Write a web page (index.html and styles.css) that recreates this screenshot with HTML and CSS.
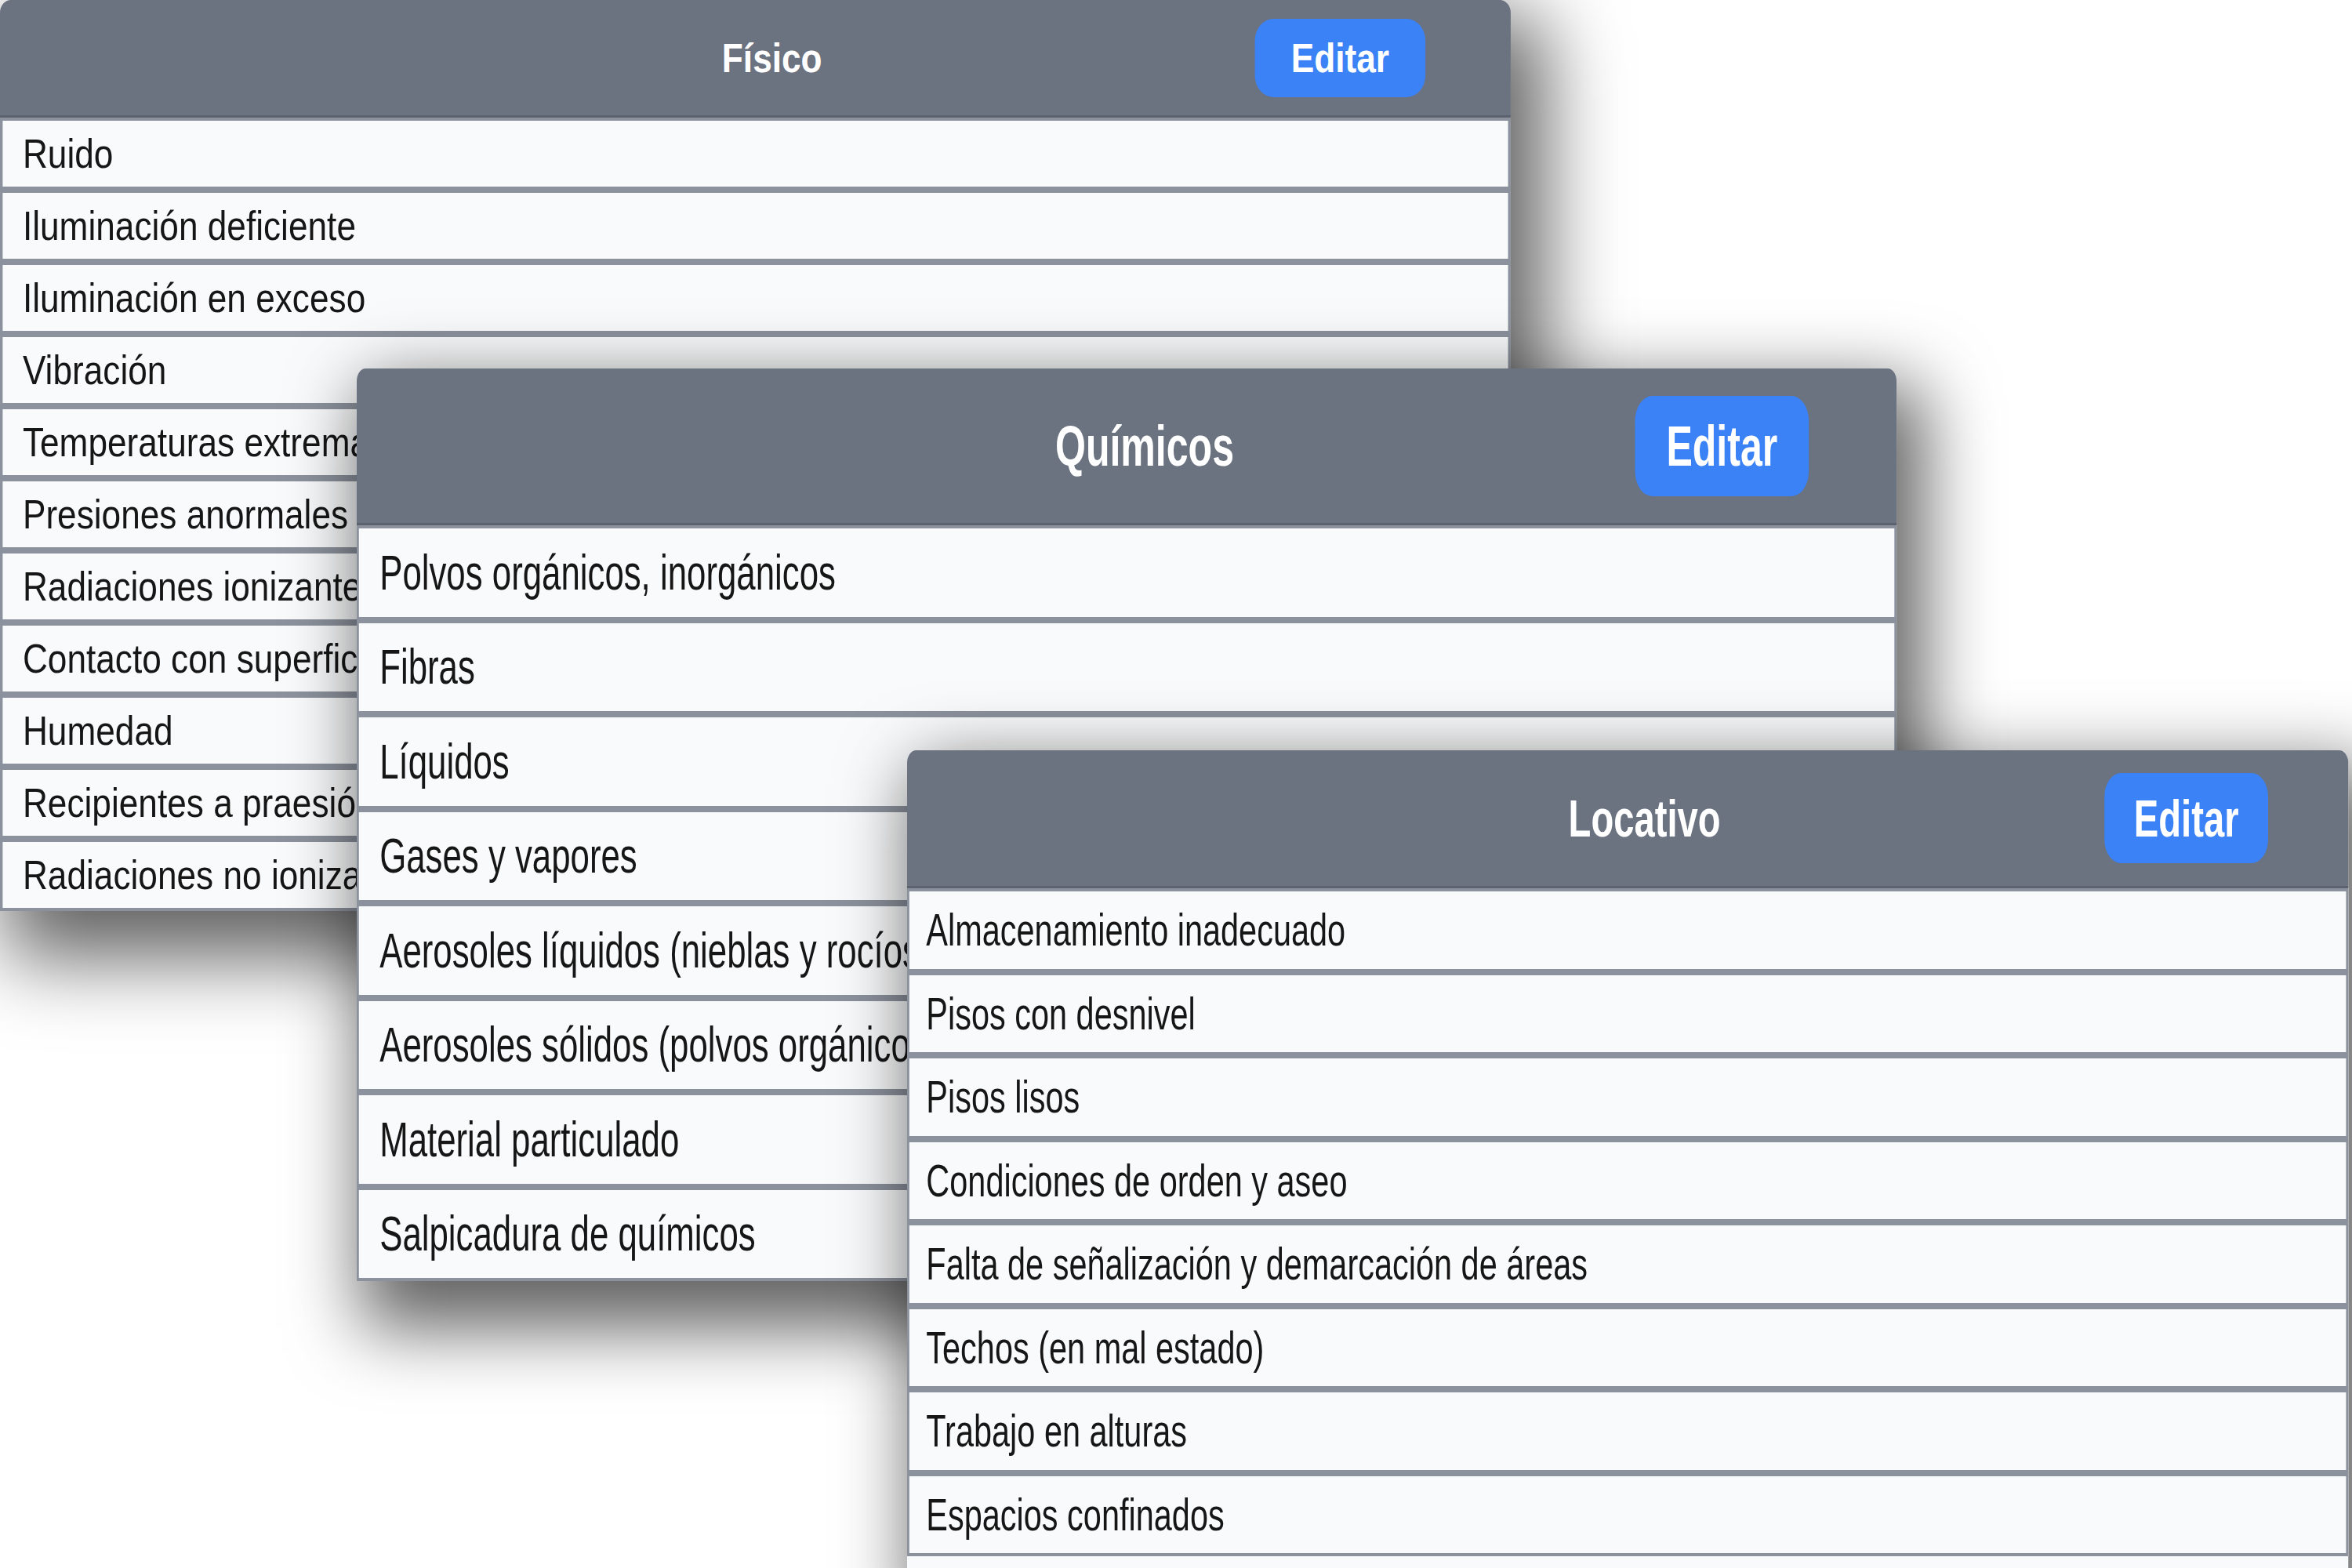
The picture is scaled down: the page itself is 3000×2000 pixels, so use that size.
FILE: index.html
```html
<!DOCTYPE html>
<html lang="es">
<head>
<meta charset="utf-8">
<title>Riesgos</title>
<link rel="stylesheet" href="styles.css">
</head>
<body>
<main class="desk">
  <section class="card card--fisico">
    <header class="card__head">
      <h2 class="card__title">Físico</h2>
      <button class="card__btn" type="button">Editar</button>
    </header>
    <ul class="card__list">
      <li class="card__item">Ruido</li>
      <li class="card__item">Iluminación deficiente</li>
      <li class="card__item">Iluminación en exceso</li>
      <li class="card__item">Vibración</li>
      <li class="card__item">Temperaturas extremas</li>
      <li class="card__item">Presiones anormales</li>
      <li class="card__item">Radiaciones ionizantes</li>
      <li class="card__item">Contacto con superficies calientes</li>
      <li class="card__item">Humedad</li>
      <li class="card__item">Recipientes a praesión</li>
      <li class="card__item">Radiaciones no ionizantes</li>
    </ul>
  </section>

  <section class="card card--quimicos">
    <header class="card__head">
      <h2 class="card__title">Químicos</h2>
      <button class="card__btn" type="button">Editar</button>
    </header>
    <ul class="card__list">
      <li class="card__item">Polvos orgánicos, inorgánicos</li>
      <li class="card__item">Fibras</li>
      <li class="card__item">Líquidos</li>
      <li class="card__item">Gases y vapores</li>
      <li class="card__item">Aerosoles líquidos (nieblas y rocíos)</li>
      <li class="card__item">Aerosoles sólidos (polvos orgánicos, inorgánicos)</li>
      <li class="card__item">Material particulado</li>
      <li class="card__item">Salpicadura de químicos</li>
    </ul>
  </section>

  <section class="card card--locativo">
    <header class="card__head">
      <h2 class="card__title">Locativo</h2>
      <button class="card__btn" type="button">Editar</button>
    </header>
    <ul class="card__list">
      <li class="card__item">Almacenamiento inadecuado</li>
      <li class="card__item">Pisos con desnivel</li>
      <li class="card__item">Pisos lisos</li>
      <li class="card__item">Condiciones de orden y aseo</li>
      <li class="card__item">Falta de señalización y demarcación de áreas</li>
      <li class="card__item">Techos (en mal estado)</li>
      <li class="card__item">Trabajo en alturas</li>
      <li class="card__item">Espacios confinados</li>
    </ul>
  </section>
</main>
</body>
</html>
```

FILE: styles.css
```css
* {
  box-sizing: border-box;
  margin: 0;
  padding: 0;
}

html,
body {
  width: 3000px;
  height: 2000px;
}

body {
  background: #ffffff;
  font-family: "Liberation Sans", Arial, sans-serif;
  overflow: hidden;
}

.desk {
  position: relative;
  width: 3000px;
  height: 2000px;
  overflow: hidden;
}

/* each card is a stretched, window-like panel on the canvas */
.card {
  position: absolute;
  transform-origin: 0 0;
  background: #f9fafb;
  border-radius: 16px 16px 0 0;
  box-shadow: 30px 40px 110px 20px rgba(0, 0, 0, 0.62);
}

.card__head {
  display: grid;
  grid-template-columns: 1fr auto 1fr;
  align-items: center;
  background: #6b7280;
  border-radius: 16px 16px 0 0;
  border-bottom: 3px solid #5d636e;
  color: #ffffff;
}

.card__title {
  grid-column: 2;
  font-weight: 700;
  line-height: 1;
}

.card__btn {
  grid-column: 3;
  justify-self: end;
  display: flex;
  align-items: center;
  justify-content: center;
  border: 0;
  border-radius: 28px;
  background: #3b82f6;
  color: #ffffff;
  font-family: inherit;
  font-weight: 700;
  line-height: 1;
}

.card__list {
  list-style: none;
}

.card__item {
  display: flex;
  align-items: center;
  border: 4px solid #8c929d;
  background: #f9fafb;
  color: #161616;
  line-height: 1;
  white-space: nowrap;
  overflow: hidden;
}

/* Físico */
.card--fisico {
  left: 0;
  top: 0;
  width: 2267px;
  transform: scaleX(0.85);
  z-index: 1;
}

.card--fisico .card__head {
  height: 150px;
}

.card--fisico .card__title {
  font-size: 52px;
  padding-left: 50px;
}

.card--fisico .card__btn {
  width: 256px;
  height: 100px;
  font-size: 52px;
  margin-right: 128px;
}

.card--fisico .card__item {
  height: 92px;
  font-size: 52px;
  padding-left: 30px;
}

/* Químicos */
.card--quimicos {
  left: 455px;
  top: 470px;
  width: 2826px;
  transform: scaleX(0.695);
  z-index: 2;
}

.card--quimicos .card__head {
  height: 200px;
}

.card--quimicos .card__title {
  font-size: 72px;
  padding-left: 66px;
}

.card--quimicos .card__btn {
  width: 319px;
  height: 128px;
  font-size: 72px;
  margin-right: 161px;
  border-radius: 32px;
}

.card--quimicos .card__item {
  height: 120.5px;
  font-size: 63px;
  padding-left: 38px;
}

/* Locativo */
.card--locativo {
  left: 1157px;
  top: 957px;
  width: 2571px;
  transform: scaleX(0.715);
  z-index: 3;
}

.card--locativo .card__head {
  height: 176px;
}

.card--locativo .card__title {
  font-size: 66px;
  padding-left: 60px;
}

.card--locativo .card__btn {
  width: 292px;
  height: 115px;
  font-size: 66px;
  margin-right: 143px;
  border-radius: 30px;
}

.card--locativo .card__list {
  padding-bottom: 40px;
}

.card--locativo .card__item {
  height: 106.5px;
  font-size: 58px;
  padding-left: 30px;
}
```
